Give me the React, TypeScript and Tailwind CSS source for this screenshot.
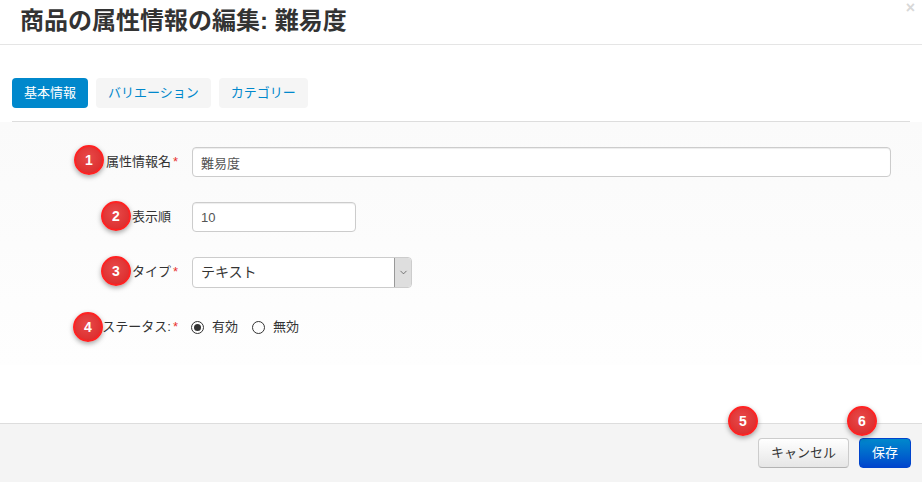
import { ChevronDown } from "lucide-react";

const FONT = {
  fontFamily:
    '"Liberation Sans", "Noto Sans CJK JP", "Noto Sans", sans-serif',
};

function Badge({ n, className }: { n: number; className: string }) {
  return (
    <div
      className={`absolute w-[30px] h-[30px] rounded-full bg-[radial-gradient(circle_at_45%_40%,#e84a4a,#d92626)] border-2 border-[#f22] shadow-[0_2px_5px_rgba(0,0,0,0.35)] flex items-center justify-center text-white font-bold text-[14px] ${className}`}
    >
      {n}
    </div>
  );
}

export default function App() {
  return (
    <div
      className="relative w-[922px] h-[482px] bg-white text-[#333] overflow-hidden flex flex-col"
      style={FONT}
    >
      {/* Header */}
      <div className="h-[45px] border-b border-[#e5e5e5] flex items-center px-5 relative">
        <h1 className="text-[24px] font-bold text-[#333] leading-none pb-[2px]">
          商品の属性情報の編集: 難易度
        </h1>
        <span className="absolute right-[7px] top-0 text-[#d8d8d8] text-[16px] font-bold leading-none">
          ×
        </span>
      </div>

      {/* Body */}
      <div className="flex-1 flex flex-col">
        <div className="px-3 pt-[33px]">
          <div className="flex gap-2 text-[13px]">
            <button className="h-[30px] px-3 rounded bg-[#0088cc] text-white">
              基本情報
            </button>
            <button className="h-[30px] px-3 rounded bg-[#f5f5f5] text-[#0088cc]">
              バリエーション
            </button>
            <button className="h-[30px] px-3 rounded bg-[#f5f5f5] text-[#0088cc]">
              カテゴリー
            </button>
          </div>
          <div className="mt-[13px] border-b border-[#dddddd]" />
        </div>

        {/* Form */}
        <div className="bg-gradient-to-b from-[#fafafa] to-[#fefefe] h-[243px] pt-[25px] pr-[31px] text-[13px]">
          <div className="flex items-center h-[30px]">
            <label className="w-[180px] text-right pr-[2px]">
              属性情報名<span className="text-[#e9322d] ml-[2px]">*</span>
            </label>
            <input
              readOnly
              value="難易度"
              className="ml-3 flex-1 h-[30px] px-2 border border-[#ccc] rounded bg-white shadow-[inset_0_1px_1px_rgba(0,0,0,0.075)] text-[13px] text-[#555]"
            />
          </div>
          <div className="flex items-center h-[30px] mt-[25px]">
            <label className="w-[180px] text-right pr-[9px]">表示順</label>
            <input
              readOnly
              value="10"
              className="ml-3 w-[164px] h-[30px] px-2 border border-[#ccc] rounded bg-white shadow-[inset_0_1px_1px_rgba(0,0,0,0.075)] text-[13px] text-[#555]"
            />
          </div>
          <div className="flex items-center h-[30px] mt-[25px]">
            <label className="w-[180px] text-right pr-[2px]">
              タイプ<span className="text-[#e9322d] ml-[2px]">*</span>
            </label>
            <div className="ml-3 w-[220px] h-[31px] border border-[#ccc] rounded bg-white flex items-stretch overflow-hidden">
              <span className="flex-1 flex items-center px-2 text-[14px] text-[#333]">
                テキスト
              </span>
              <span className="w-[17px] bg-[#dedede] border-l border-[#999] flex items-center justify-center">
                <ChevronDown size={11} strokeWidth={1.5} className="text-[#444]" />
              </span>
            </div>
          </div>
          <div className="flex items-center h-[30px] mt-[25px]">
            <label className="w-[180px] text-right pr-[2px]">
              ステータス:<span className="text-[#e9322d] ml-[2px]">*</span>
            </label>
            <div className="ml-[11px] flex items-center">
              <span className="w-[13px] h-[13px] rounded-full border border-[#333] flex items-center justify-center">
                <span className="w-[7px] h-[7px] rounded-full bg-[#333]" />
              </span>
              <span className="ml-2">有効</span>
              <span className="ml-[14px] w-[13px] h-[13px] rounded-full border border-[#333]" />
              <span className="ml-2">無効</span>
            </div>
          </div>
        </div>
        <div className="flex-1" />
      </div>

      {/* Footer */}
      <div className="h-[59px] border-t border-[#ddd] bg-[#f4f4f4] flex items-center justify-end gap-[10px] pr-[11px] text-[13px]">
        <button className="h-[30px] px-3 rounded border border-[#ccc] border-b-[#b3b3b3] bg-gradient-to-b from-white to-[#e6e6e6] text-[#333]">
          キャンセル
        </button>
        <button className="h-[30px] px-3 rounded border border-[#0044cc] bg-gradient-to-b from-[#0088cc] to-[#0044cc] text-white">
          保存
        </button>
      </div>

      {/* Annotation badges */}
      <Badge n={1} className="left-[74px] top-[145px]" />
      <Badge n={2} className="left-[101px] top-[201px]" />
      <Badge n={3} className="left-[101px] top-[256px]" />
      <Badge n={4} className="left-[73px] top-[312px]" />
      <Badge n={5} className="left-[728px] top-[406px]" />
      <Badge n={6} className="left-[847px] top-[406px]" />
    </div>
  );
}
